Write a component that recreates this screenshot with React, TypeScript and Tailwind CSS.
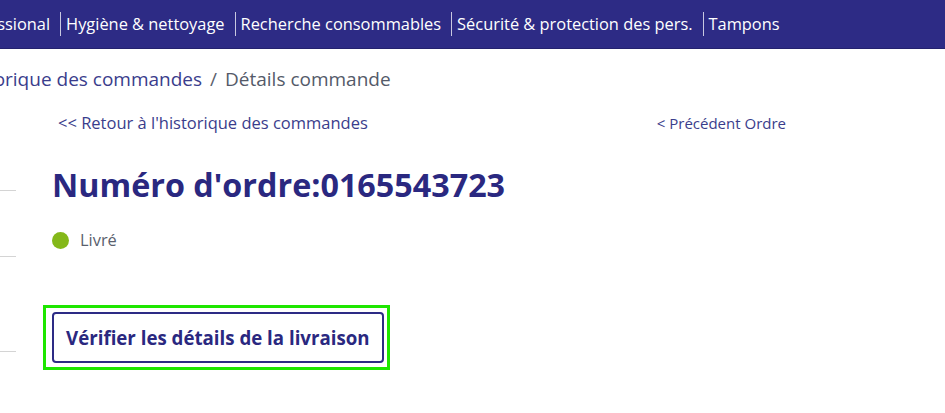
const navItems = [
  "Professional",
  "Hygiène & nettoyage",
  "Recherche consommables",
  "Sécurité & protection des pers.",
  "Tampons",
];

export default function App() {
  return (
    <div className="min-h-screen bg-white font-['Open_Sans',sans-serif] overflow-hidden">
      <nav className="h-[49px] bg-[#2d2b85] border-b border-[#24226e] flex items-center overflow-hidden">
        <div className="flex items-center -ml-[49px] shrink-0">
          {navItems.map((item, i) => (
            <div key={item} className="flex items-center">
              {i > 0 && <span className="w-px h-[24px] bg-[#c8c8e0]" />}
              <span className="text-white text-[16.4px] font-medium whitespace-nowrap pl-[5px] pr-[10px]">{item}</span>
            </div>
          ))}
        </div>
      </nav>

      <div className="flex">
        <div className="w-[16px] shrink-0 flex flex-col">
          <div className="h-[141px]" />
          <div className="h-px bg-[#d4d4d4]" />
          <div className="h-[65px]" />
          <div className="h-px bg-[#d4d4d4]" />
          <div className="h-[94px]" />
          <div className="h-px bg-[#d4d4d4]" />
        </div>

        <div className="flex-1">
          <div className="mt-[16px] -ml-[57px] flex items-center text-[19px] leading-[28px] whitespace-nowrap">
            <span className="text-[#3a3d8c]">Historique des commandes</span>
            <span className="text-[#5a5f6e] mx-[8px]">/</span>
            <span className="text-[#545a69]">Détails commande</span>
          </div>

          <div className="ml-[42px] mt-[20px] w-[728px] flex justify-between items-center leading-[20px] text-[#3a3d8c]">
            <a href="#" className="text-[16.5px]">&lt;&lt; Retour à l'historique des commandes</a>
            <a href="#" className="text-[15px]">&lt; Précédent Ordre</a>
          </div>

          <div className="ml-[36px]">
            <h1 className="mt-[30px] text-[32.3px] leading-[42px] font-bold text-[#2a2880]">
              Numéro d'ordre:0165543723
            </h1>

            <div className="mt-[25px] flex items-center gap-[11px]">
              <span className="w-[17px] h-[17px] rounded-full bg-[#84b819]" />
              <span className="text-[16.4px] leading-[20px] text-[#5a5f6e]">Livré</span>
            </div>

            <div className="mt-[55px] -ml-[9px] inline-block border-[3px] border-[#1ee600] pt-[4px] pb-[4px] pl-[6px] pr-[3px]">
              <button className="h-[51px] px-[12px] pt-[2px] border-2 border-[#2d2b85] rounded-[4px] bg-white text-[18.7px] font-bold text-[#2a2880]">
                Vérifier les détails de la livraison
              </button>
            </div>
          </div>
        </div>
      </div>
    </div>
  );
}
